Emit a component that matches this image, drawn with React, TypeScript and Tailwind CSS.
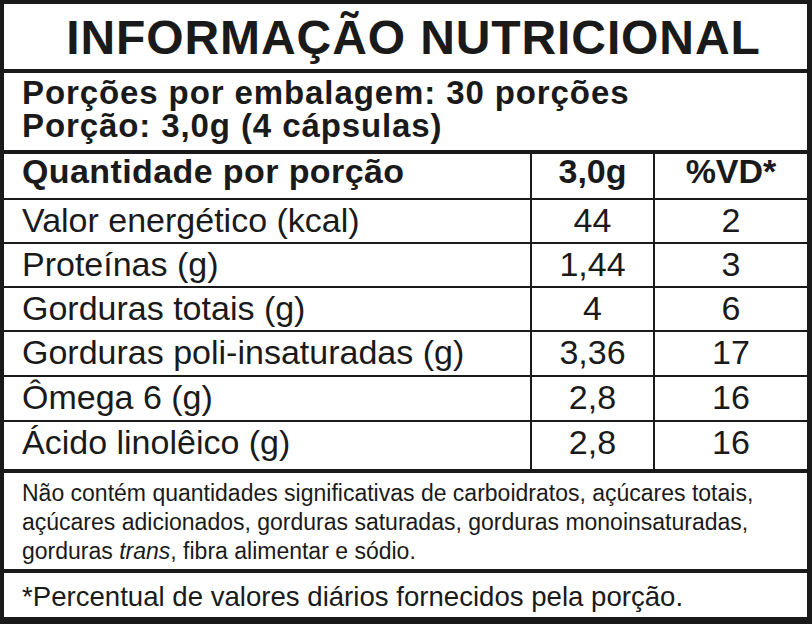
const rows = [
  { name: 'Valor energético (kcal)', qty: '44', vd: '2', h: 'h-[42px]' },
  { name: 'Proteínas (g)', qty: '1,44', vd: '3', h: 'h-[42px]' },
  { name: 'Gorduras totais (g)', qty: '4', vd: '6', h: 'h-[42px]' },
  { name: 'Gorduras poli-insaturadas (g)', qty: '3,36', vd: '17', h: 'h-[43px]' },
  { name: 'Ômega 6 (g)', qty: '2,8', vd: '16', h: 'h-[43px]' },
  { name: 'Ácido linolêico (g)', qty: '2,8', vd: '16', h: 'h-[47px]' },
]

export default function App() {
  return (
    <div className="w-[812px] h-[624px] bg-white text-[#1a1a1a] font-['Liberation_Sans',Arial,sans-serif]">
      <div className="w-full h-full border-[#1a1a1a] border-t-4 border-l-4 border-r-[5px] border-b-[7px] flex flex-col">
        {/* title */}
        <div className="h-[69px] border-b-4 border-[#1a1a1a] pt-[10px] pl-[16px] text-center">
          <h1 className="text-[48px] leading-[48px] font-bold tracking-[0.9px]">
            INFORMAÇÃO NUTRICIONAL
          </h1>
        </div>

        {/* portions */}
        <div className="h-[81px] border-b-4 border-[#1a1a1a] pt-[3px] pl-[18px] text-[33px] leading-[33px] font-bold tracking-[0.9px]">
          <p>Porções por embalagem: 30 porções</p>
          <p>Porção: 3,0g (4 cápsulas)</p>
        </div>

        {/* table */}
        <div className="grid grid-cols-[526px_123px_154px] h-[46px] border-b-2 border-[#1a1a1a] text-[34px] leading-[34px] font-bold">
          <div className="pl-[18px] tracking-[0.4px]">Quantidade por porção</div>
          <div className="border-l-2 border-[#1a1a1a] text-center">3,0g</div>
          <div className="border-l-2 border-[#1a1a1a] text-center">%VD*</div>
        </div>
        {rows.map((r, i) => (
          <div
            key={r.name}
            className={`grid grid-cols-[526px_123px_154px] text-[34px] leading-[40px] border-[#1a1a1a] ${
              i === rows.length - 1 ? 'border-b-4' : 'border-b-2'
            }`}
          >
            <div className={`${r.h} pl-[18px]`}>{r.name}</div>
            <div className="border-l-2 border-[#1a1a1a] text-center">{r.qty}</div>
            <div className="border-l-2 border-[#1a1a1a] text-center">{r.vd}</div>
          </div>
        ))}

        {/* note */}
        <div className="h-[100px] border-b-4 border-[#1a1a1a] pt-[6px] pl-[18px] text-[23px] leading-[29px]">
          <p>Não contém quantidades significativas de carboidratos, açúcares totais,</p>
          <p>açúcares adicionados, gorduras saturadas, gorduras monoinsaturadas,</p>
          <p>
            gorduras <i>trans</i>, fibra alimentar e sódio.
          </p>
        </div>

        <div className="flex-1 pt-[3px] pl-[18px] text-[27.6px] leading-[41px]">
          *Percentual de valores diários fornecidos pela porção.
        </div>
      </div>
    </div>
  )
}
